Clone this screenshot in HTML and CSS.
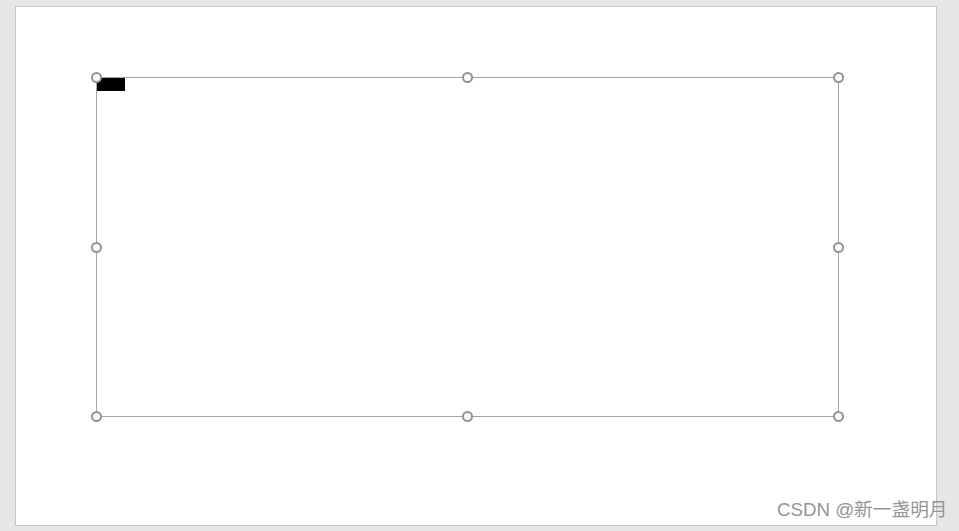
FILE: index.html
```html
<!DOCTYPE html>
<html>
<head>
<meta charset="utf-8">
<link rel="stylesheet" href="styles.css">
</head>
<body>
<div class="slide">
  <div class="shape">
    <div class="cursor"></div>
    <span class="handle h-tl"></span>
    <span class="handle h-tm"></span>
    <span class="handle h-tr"></span>
    <span class="handle h-ml"></span>
    <span class="handle h-mr"></span>
    <span class="handle h-bl"></span>
    <span class="handle h-bm"></span>
    <span class="handle h-br"></span>
  </div>
</div>
<div class="watermark">CSDN @新一盏明月</div>
</body>
</html>
```
FILE: styles.css
```css
html, body {
  margin: 0;
  padding: 0;
}
body {
  width: 959px;
  height: 531px;
  background: #e6e6e6;
  position: relative;
  overflow: hidden;
  padding: 6px 0 0 15px;
  box-sizing: border-box;
}
.slide {
  background: #ffffff;
  border: 1px solid #c6c6c6;
  padding: 70px 0 0 80px;
  box-sizing: content-box;
  width: 840px;
  height: 448px;
}
.shape {
  position: relative;
  width: 741px;
  height: 338px;
  border: 1px solid #a3a3a3;
}
.cursor {
  width: 28px;
  height: 13px;
  background: #000000;
}
.handle {
  position: absolute;
  width: 7px;
  height: 7px;
  border: 2px solid #939393;
  border-radius: 50%;
  background: #ffffff;
}
.h-tl { left: -6px; top: -6px; }
.h-tm { left: 365px; top: -6px; }
.h-tr { right: -6px; top: -6px; }
.h-ml { left: -6px; top: 164px; }
.h-mr { right: -6px; top: 164px; }
.h-bl { left: -6px; bottom: -6px; }
.h-bm { left: 365px; bottom: -6px; }
.h-br { right: -6px; bottom: -6px; }
.watermark {
  position: absolute;
  left: 777px;
  top: 498px;
  font-family: "Liberation Sans", "Noto Sans CJK SC", sans-serif;
  font-size: 18.7px;
  line-height: 24px;
  color: #959595;
  white-space: nowrap;
}
```
